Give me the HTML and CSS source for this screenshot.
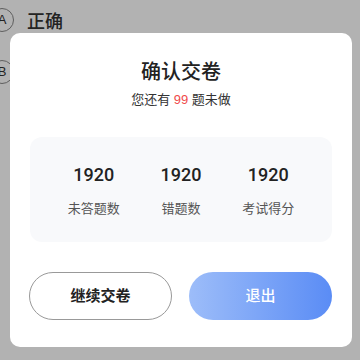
FILE: index.html
```html
<!DOCTYPE html>
<html lang="zh-CN">
<head>
    <meta charset="UTF-8">
    <meta name="viewport" content="width=device-width, initial-scale=1.0">
    <title>确认交卷</title>
    <link rel="stylesheet" href="styles.css">
</head>
<body>
    <div class="page">
        <div class="option">
            <span class="option-key">A</span>
            <span class="option-text">正确</span>
        </div>
        <div class="option">
            <span class="option-key">B</span>
            <span class="option-text">错误</span>
        </div>
    </div>

    <div class="mask">
        <div class="dialog">
            <div class="dialog-title">确认交卷</div>
            <div class="dialog-tip">您还有 <span class="num-red">99</span> 题未做</div>

            <div class="stats">
                <div class="stat-item">
                    <div class="stat-num">1920</div>
                    <div class="stat-label">未答题数</div>
                </div>
                <div class="stat-item">
                    <div class="stat-num">1920</div>
                    <div class="stat-label">错题数</div>
                </div>
                <div class="stat-item">
                    <div class="stat-num">1920</div>
                    <div class="stat-label">考试得分</div>
                </div>
            </div>

            <div class="btns">
                <div class="btn btn-plain">继续交卷</div>
                <div class="btn btn-primary">退出</div>
            </div>
        </div>
    </div>
</body>
</html>
```

FILE: styles.css
```css
*{padding: 0;margin: 0;box-sizing: border-box;}
html,body{
    width: 100%;
    height: 100%;
}
body{
    overflow: hidden;
    background: #fff;
    font-family: "Liberation Sans", "Noto Sans CJK SC", sans-serif;
    color: #333;
}

/* 题目选项 */
.page{
    padding-top: 7px;
}
.page .option{
    display: flex;
    align-items: center;
    height: 26px;
    margin-bottom: 26px;
}
.option .option-key{
    width: 24px;
    height: 24px;
    margin-left: -10px;
    border: solid 1px #888;
    border-radius: 50%;
    font-size: 13px;
    line-height: 22px;
    text-align: center;
    color: #333;
}
.option .option-text{
    margin-left: 13px;
    font-size: 18px;
    font-weight: 500;
    color: #333;
}

/* 弹窗 */
.mask{
    position: fixed;
    top: 0;
    left: 0;
    right: 0;
    bottom: 0;
    background-color: rgba(0,0,0,.3);
    padding: 33px 8px 0 10px;
}
.dialog{
    height: 314px;
    background: #fff;
    border-radius: 10px;
    padding: 27px 20px 0;
    text-align: center;
}
.dialog-title{
    font-size: 20px;
    line-height: 24px;
    font-weight: 500;
    color: #222;
}
.dialog-tip{
    margin-top: 7px;
    font-size: 13px;
    line-height: 18px;
    color: #333;
}
.dialog-tip .num-red{
    color: #f04a4a;
    font-weight: 500;
}
.stats{
    display: flex;
    margin-top: 28px;
    height: 105px;
    padding: 27px 20px 0;
    background: #f8f9fb;
    border-radius: 12px;
}
.stats .stat-item{
    flex: 1;
}
.stat-item .stat-num{
    font-family: Roboto, "Liberation Sans", sans-serif;
    font-size: 18px;
    line-height: 22px;
    font-weight: 500;
    color: #222;
}
.stat-item .stat-label{
    margin-top: 14px;
    font-size: 13px;
    line-height: 18px;
    color: #555;
}
.btns{
    display: flex;
    justify-content: space-between;
    margin-top: 30px;
}
.btns .btn{
    width: 143px;
    height: 48px;
    border-radius: 24px;
    font-size: 15px;
    line-height: 48px;
    font-weight: 600;
}
.btn-plain{
    margin-left: -1px;
    border: solid 1px #999;
    line-height: 46px !important;
    color: #222;
}
.btn-primary{
    background: linear-gradient(90deg, #9dbdf9, #5a8cf5);
    color: #fff;
    font-weight: 500 !important;
}
```
